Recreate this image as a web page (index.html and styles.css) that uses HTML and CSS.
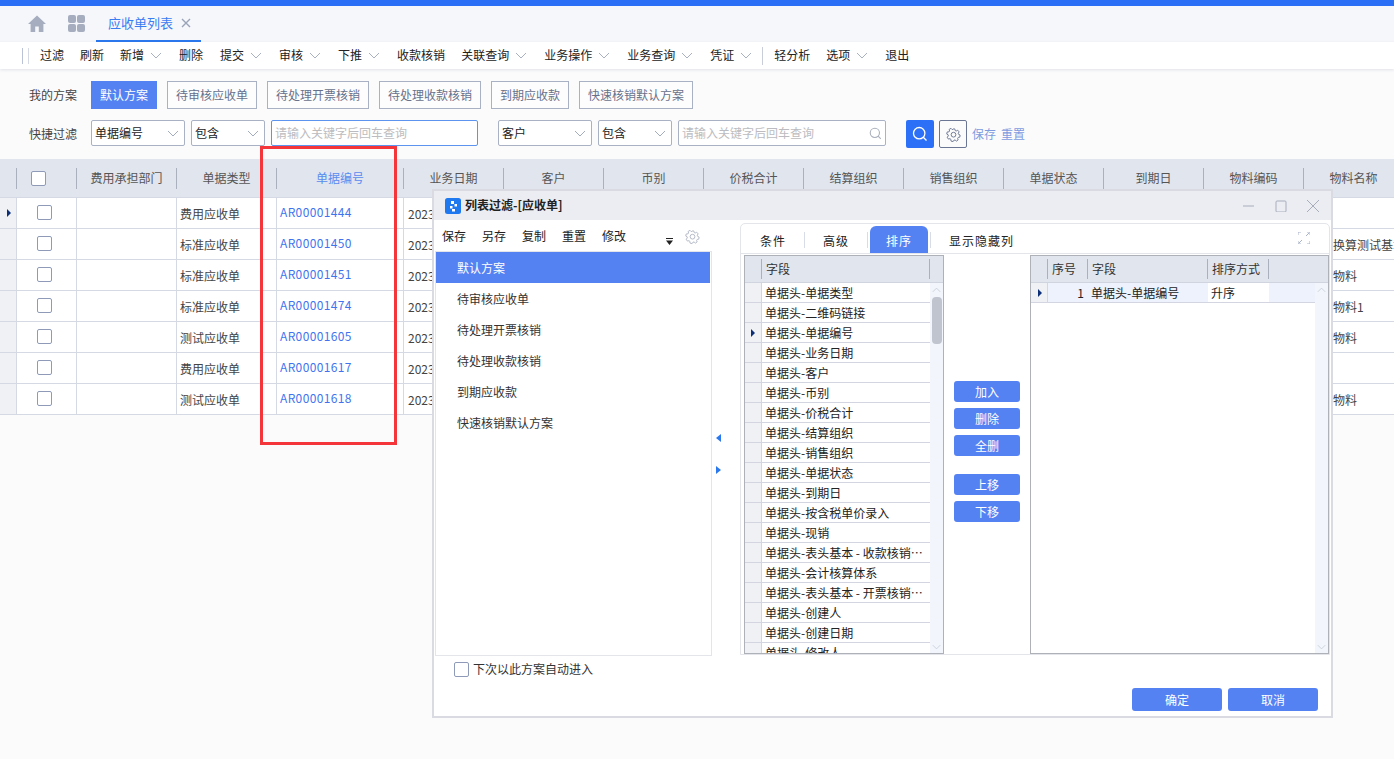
FILE: index.html
```html
<!DOCTYPE html>
<html lang="zh-CN">
<head>
<meta charset="utf-8">
<title>应收单列表</title>
<link rel="stylesheet" href="styles.css">
</head>
<body>
<svg class="defs" width="0" height="0" aria-hidden="true">
  <symbol id="chev" viewBox="0 0 12 7"><path d="M1 1l5 5 5-5" fill="none" stroke="currentColor" stroke-width="1"/></symbol>
  <symbol id="gear" viewBox="0 0 24 24"><path d="M12 2.5l2 .3.7 2.6 1.6.7 2.4-1.3 2.3 2.7-1.4 2.2.5 1.7 2.4 1.1-.4 3.4-2.6.5-.9 1.5.8 2.5-2.9 1.9-1.9-1.8-1.8.2-1.4 2.3-3.4-.8-.2-2.7-1.4-1.1-2.6.6L1.9 16l1.8-2-.2-1.8L1.2 11l.7-3.4 2.7-.1 1.1-1.4L5 3.6l3-1.8 1.8 2 1.7-.2z" fill="none" stroke="currentColor" stroke-width="1.6" stroke-linejoin="round" transform="translate(0 .3)"/><circle cx="12" cy="12.3" r="3.8" fill="none" stroke="currentColor" stroke-width="1.6"/></symbol>
  <symbol id="search" viewBox="0 0 16 16"><circle cx="7.2" cy="7.2" r="5.7" fill="none" stroke="currentColor" stroke-width="1.3"/><path d="M11.3 11.3l3.2 3.2" stroke="currentColor" stroke-width="1.3"/></symbol>
</svg>

<div class="topbar"></div>

<nav class="tabs">
  <svg class="ico-home" viewBox="0 0 18 17"><path d="M9 .5L0 9h2.6v8h4.6v-5.5h3.6V17h4.6V9H18z" fill="#a5adbf"/></svg>
  <span class="ico-apps"><i></i><i></i><i></i><i></i></span>
  <div class="tab">应收单列表
    <svg class="tab-x" viewBox="0 0 10 10"><path d="M1 1l8 8M9 1l-8 8" stroke="#9aa3b8" stroke-width="1.4"/></svg>
  </div>
</nav>

<div class="toolbar">
  <span class="tb-rule"></span><span class="tb-rule tb-rule-2"></span>
  <span class="tb">过滤</span>
  <span class="tb">刷新</span>
  <span class="tb">新增<svg class="tb-chev"><use href="#chev"/></svg></span>
  <span class="tb tb-wide">删除</span>
  <span class="tb">提交<svg class="tb-chev"><use href="#chev"/></svg></span>
  <span class="tb">审核<svg class="tb-chev"><use href="#chev"/></svg></span>
  <span class="tb">下推<svg class="tb-chev"><use href="#chev"/></svg></span>
  <span class="tb">收款核销</span>
  <span class="tb">关联查询<svg class="tb-chev"><use href="#chev"/></svg></span>
  <span class="tb">业务操作<svg class="tb-chev"><use href="#chev"/></svg></span>
  <span class="tb">业务查询<svg class="tb-chev"><use href="#chev"/></svg></span>
  <span class="tb">凭证<svg class="tb-chev"><use href="#chev"/></svg></span>
  <span class="tb-sep"></span>
  <span class="tb">轻分析</span>
  <span class="tb">选项<svg class="tb-chev"><use href="#chev"/></svg></span>
  <span class="tb">退出</span>
</div>

<section class="filters">
  <div class="scheme-row">
    <span class="f-label">我的方案</span>
    <div class="schemes">
      <span class="scheme scheme-on">默认方案</span>
      <span class="scheme">待审核应收单</span>
      <span class="scheme">待处理开票核销</span>
      <span class="scheme">待处理收款核销</span>
      <span class="scheme">到期应收款</span>
      <span class="scheme">快速核销默认方案</span>
    </div>
  </div>
  <div class="quick-row">
    <span class="f-label">快捷过滤</span>
    <span class="sel sel-a">单据编号<svg class="sel-chev"><use href="#chev"/></svg></span>
    <span class="sel sel-b">包含<svg class="sel-chev"><use href="#chev"/></svg></span>
    <span class="inp inp-on">请输入关键字后回车查询</span>
    <span class="sel sel-a sel-gap">客户<svg class="sel-chev"><use href="#chev"/></svg></span>
    <span class="sel sel-b">包含<svg class="sel-chev"><use href="#chev"/></svg></span>
    <span class="inp">请输入关键字后回车查询<svg class="inp-ico"><use href="#search"/></svg></span>
    <span class="btn-search"><svg class="btn-search-ico"><use href="#search"/></svg></span>
    <span class="btn-gear"><svg class="btn-gear-ico"><use href="#gear"/></svg></span>
    <span class="f-link f-link-a">保存</span>
    <span class="f-link">重置</span>
  </div>
</section>

<section class="grid">
  <div class="g-head">
    <span class="gh gh-mark"></span>
    <span class="gh gh-check"><span class="cb"></span></span>
    <span class="gh gh-w">费用承担部门</span>
    <span class="gh gh-w">单据类型</span>
    <span class="gh gh-no">单据编号</span>
    <span class="gh gh-w">业务日期</span>
    <span class="gh gh-w">客户</span>
    <span class="gh gh-w">币别</span>
    <span class="gh gh-w">价税合计</span>
    <span class="gh gh-w">结算组织</span>
    <span class="gh gh-w">销售组织</span>
    <span class="gh gh-w">单据状态</span>
    <span class="gh gh-w">到期日</span>
    <span class="gh gh-w">物料编码</span>
    <span class="gh gh-w">物料名称</span>
  </div>
  <div class="g-row">
    <span class="c c-mark"><i class="tri"></i></span><span class="c c-check"><span class="cb"></span></span><span class="c"></span>
    <span class="c c-type">费用应收单</span><span class="c c-no">AR00001444</span><span class="c c-date">2023-01-05</span><span class="c c-name"></span>
  </div>
  <div class="g-row">
    <span class="c c-mark"></span><span class="c c-check"><span class="cb"></span></span><span class="c"></span>
    <span class="c c-type">标准应收单</span><span class="c c-no">AR00001450</span><span class="c c-date">2023-01-05</span><span class="c c-name">单位换算测试基本</span>
  </div>
  <div class="g-row">
    <span class="c c-mark"></span><span class="c c-check"><span class="cb"></span></span><span class="c"></span>
    <span class="c c-type">标准应收单</span><span class="c c-no">AR00001451</span><span class="c c-date">2023-01-05</span><span class="c c-name">测试物料</span>
  </div>
  <div class="g-row">
    <span class="c c-mark"></span><span class="c c-check"><span class="cb"></span></span><span class="c"></span>
    <span class="c c-type">标准应收单</span><span class="c c-no">AR00001474</span><span class="c c-date">2023-01-05</span><span class="c c-name">测试物料1</span>
  </div>
  <div class="g-row">
    <span class="c c-mark"></span><span class="c c-check"><span class="cb"></span></span><span class="c"></span>
    <span class="c c-type">测试应收单</span><span class="c c-no">AR00001605</span><span class="c c-date">2023-01-05</span><span class="c c-name">测试物料</span>
  </div>
  <div class="g-row">
    <span class="c c-mark"></span><span class="c c-check"><span class="cb"></span></span><span class="c"></span>
    <span class="c c-type">费用应收单</span><span class="c c-no">AR00001617</span><span class="c c-date">2023-01-05</span><span class="c c-name"></span>
  </div>
  <div class="g-row">
    <span class="c c-mark"></span><span class="c c-check"><span class="cb"></span></span><span class="c"></span>
    <span class="c c-type">测试应收单</span><span class="c c-no">AR00001618</span><span class="c c-date">2023-01-05</span><span class="c c-name">测试物料</span>
  </div>
</section>

<div class="redbox"></div>

<div class="dialog">
  <header class="d-title">
    <svg class="d-logo" viewBox="0 0 16 16"><rect width="16" height="16" rx="2.5" fill="#1e78f0"/><rect x="6" y="3" width="3" height="3" fill="#fff"/><rect x="9.5" y="6" width="2.5" height="2.5" fill="#fff"/><rect x="5" y="8" width="2.5" height="2.5" fill="#fff"/><rect x="7" y="11" width="3" height="2.5" fill="#fff"/></svg>
    <span class="d-name">列表过滤-[应收单]</span>
    <span class="d-ctrls">
      <svg class="d-ctrl" viewBox="0 0 12 12"><path d="M0 6h11" stroke="#a7adbb"/></svg>
      <svg class="d-ctrl" viewBox="0 0 12 12"><rect x="1" y="1" width="10" height="11" rx="1" fill="none" stroke="#a7adbb"/></svg>
      <svg class="d-ctrl" viewBox="0 0 12 12"><path d="M0 0l12 12M12 0L0 12" stroke="#a7adbb"/></svg>
    </span>
  </header>

  <div class="d-body">
    <aside class="d-left">
      <div class="d-tools">
        <span class="d-tool">保存</span><span class="d-tool">另存</span><span class="d-tool">复制</span><span class="d-tool">重置</span><span class="d-tool">修改</span>
        <svg class="d-more" viewBox="0 0 7 7"><path d="M0 0h7v1H0zM0 2.5h7L3.5 7z" fill="#222"/></svg>
        <svg class="d-gear"><use href="#gear"/></svg>
      </div>
      <ul class="plans">
        <li class="plan plan-on">默认方案</li>
        <li class="plan">待审核应收单</li>
        <li class="plan">待处理开票核销</li>
        <li class="plan">待处理收款核销</li>
        <li class="plan">到期应收款</li>
        <li class="plan">快速核销默认方案</li>
      </ul>
    </aside>

    <div class="split"><i class="arrow arrow-l"></i><i class="arrow arrow-r"></i></div>

    <div class="d-right">
      <div class="d-tabs">
        <span class="dt">条件</span><span class="dt-sep"></span>
        <span class="dt">高级</span><span class="dt-sep dt-sep-near"></span>
        <span class="dt dt-on">排序</span><span class="dt-sep dt-sep-after"></span>
        <span class="dt">显示隐藏列</span>
        <svg class="d-expand" viewBox="0 0 12 12"><path d="M0 3V0h3M9 0h3v3M12 9v3H9M3 12H0V9M8 4l3-3M4 8l-3 3" fill="none" stroke="#a9b4ca"/></svg>
      </div>
      <div class="d-pane">
        <div class="lg">
          <div class="lg-head"><span class="lh-mark"></span><span class="lh-field">字段</span></div>
          <div class="lg-main">
            <div class="lg-rows">
              <div class="lr"><span class="lr-m"></span><span class="lr-t">单据头-单据类型</span></div>
              <div class="lr"><span class="lr-m"></span><span class="lr-t">单据头-二维码链接</span></div>
              <div class="lr"><span class="lr-m"><i class="tri"></i></span><span class="lr-t">单据头-单据编号</span></div>
              <div class="lr"><span class="lr-m"></span><span class="lr-t">单据头-业务日期</span></div>
              <div class="lr"><span class="lr-m"></span><span class="lr-t">单据头-客户</span></div>
              <div class="lr"><span class="lr-m"></span><span class="lr-t">单据头-币别</span></div>
              <div class="lr"><span class="lr-m"></span><span class="lr-t">单据头-价税合计</span></div>
              <div class="lr"><span class="lr-m"></span><span class="lr-t">单据头-结算组织</span></div>
              <div class="lr"><span class="lr-m"></span><span class="lr-t">单据头-销售组织</span></div>
              <div class="lr"><span class="lr-m"></span><span class="lr-t">单据头-单据状态</span></div>
              <div class="lr"><span class="lr-m"></span><span class="lr-t">单据头-到期日</span></div>
              <div class="lr"><span class="lr-m"></span><span class="lr-t">单据头-按含税单价录入</span></div>
              <div class="lr"><span class="lr-m"></span><span class="lr-t">单据头-现销</span></div>
              <div class="lr"><span class="lr-m"></span><span class="lr-t">单据头-表头基本 - 收款核销状态</span></div>
              <div class="lr"><span class="lr-m"></span><span class="lr-t">单据头-会计核算体系</span></div>
              <div class="lr"><span class="lr-m"></span><span class="lr-t">单据头-表头基本 - 开票核销状态</span></div>
              <div class="lr"><span class="lr-m"></span><span class="lr-t">单据头-创建人</span></div>
              <div class="lr"><span class="lr-m"></span><span class="lr-t">单据头-创建日期</span></div>
              <div class="lr"><span class="lr-m"></span><span class="lr-t">单据头-修改人</span></div>
            </div>
            <div class="sb">
              <svg class="sb-up"><use href="#chev"/></svg>
              <span class="sb-thumb"></span>
              <svg class="sb-down"><use href="#chev"/></svg>
            </div>
          </div>
        </div>

        <div class="moves">
          <span class="mv">加入</span>
          <span class="mv">删除</span>
          <span class="mv">全删</span>
          <span class="mv mv-gap">上移</span>
          <span class="mv">下移</span>
        </div>

        <div class="rg">
          <div class="rg-head">
            <span class="rh rh-mark"></span>
            <span class="rh rh-seq">序号</span>
            <span class="rh rh-field">字段</span>
            <span class="rh rh-order">排序方式</span>
            <span class="rh rh-end"></span>
          </div>
          <div class="rg-main">
            <div class="rg-rows">
              <div class="rr">
                <span class="rr-mark"><i class="tri"></i></span>
                <span class="rr-seq">1</span>
                <span class="rr-field">单据头-单据编号</span>
                <span class="rr-order">升序</span>
                <span class="rr-end"></span>
              </div>
            </div>
            <div class="sb sb-r">
              <svg class="sb-up"><use href="#chev"/></svg>
              <svg class="sb-down"><use href="#chev"/></svg>
            </div>
          </div>
        </div>
      </div>
    </div>
  </div>

  <footer class="d-foot">
    <label class="auto"><span class="cb"></span>下次以此方案自动进入</label>
    <div class="d-btns"><span class="d-btn">确定</span><span class="d-btn">取消</span></div>
  </footer>
</div>
</body>
</html>
```

FILE: styles.css
```css
* { box-sizing: border-box; }
html, body { margin: 0; height: 100%; }
body {
  width: 1394px; height: 759px; overflow: hidden; position: relative;
  background: #fbfbfc; color: #333;
  font: 12px/1.2 "Noto Sans CJK SC", "Noto Sans", sans-serif;
}
ul { list-style: none; margin: 0; padding: 0; }
i { display: block; }
.defs { position: absolute; }

.topbar { height: 6px; background: #2b6ff6; }

.tabs { height: 36px; background: #f6f7fb; display: flex; align-items: center; padding-left: 28px; }
.ico-home { width: 18px; height: 17px; margin-top: -2px; }
.ico-apps { width: 17px; height: 17px; margin-left: 22px; margin-top: -2px; display: grid; grid-template-columns: 8px 8px; gap: 1px; }
.ico-apps i { background: #a5adbf; border-radius: 2px; }
.tab {
  margin-left: 11px; width: 105px; height: 36px; display: flex; align-items: center; padding: 0 0 0 12px;
  color: #3a7df2; font-size: 13px; border-bottom: 2px solid #2b78ee; white-space: nowrap; flex: none;
}
.tab-x { width: 10px; height: 10px; margin-left: 8px; flex: none; }

.toolbar {
  height: 27px; background: #fff; display: flex; align-items: center; padding-left: 22px; color: #222;
  box-shadow: 0 1px 3px rgba(40,50,80,.12); position: relative;
}
.tb-rule { width: 1px; height: 16px; background: #b9c2d6; margin-right: 5px; }
.tb-rule-2 { margin-right: 11px; background: #d4d9e4; }
.tb { display: flex; align-items: center; margin-right: 16px; white-space: nowrap; }
.tb-wide { margin-right: 17px; }
.tb-chev { width: 12px; height: 7px; margin: 1px 1px 0 6px; color: #a9b0c2; }
.tb-sep { width: 1px; height: 18px; background: #c8cdd9; margin: 0 11px 0 -7px; }

.filters { height: 90px; padding: 12px 0 0 29px; }
.scheme-row { display: flex; align-items: center; height: 28px; }
.f-label { width: 62px; color: #444; flex: none; }
.schemes { display: flex; gap: 10px; }
.scheme {
  height: 28px; padding: 0 8px; border: 1px solid #a9b1c4; display: flex; align-items: center;
  color: #68718a; white-space: nowrap; background: #fdfdfe;
}
.scheme-on { background: #5582f3; border-color: #5582f3; color: #fff; }

.quick-row { display: flex; align-items: flex-start; margin-top: 11px; height: 28px; }
.quick-row .f-label { line-height: 28px; }
.sel {
  height: 26px; border: 1px solid #a9b1c4; border-radius: 2px; background: #fff; color: #222;
  display: flex; align-items: center; justify-content: space-between; padding: 0 5px 0 3px; margin-right: 6px; flex: none;
}
.sel-a { width: 94px; }
.sel-b { width: 74px; }
.sel-gap { margin-left: 14px; }
.sel-chev { width: 12px; height: 7px; color: #a3abbe; }
.inp {
  height: 26px; width: 208px; border: 1px solid #a9b1c4; border-radius: 2px; background: #fff; color: #bcbcc0;
  display: flex; align-items: center; justify-content: space-between; padding: 0 3px; flex: none;
}
.inp-on { width: 207px; border-color: #5d94f0; margin-right: 6px; }
.inp-ico { width: 13px; height: 13px; color: #a9aebb; }
.btn-search {
  width: 28px; height: 28px; margin-left: 20px; background: #2b70f6; border-radius: 2px;
  display: flex; align-items: center; justify-content: center;
}
.btn-search-ico { width: 16px; height: 16px; color: #fff; }
.btn-gear {
  width: 28px; height: 28px; margin-left: 5px; border: 1px solid #6b7694; border-radius: 2px;
  display: flex; align-items: center; justify-content: center;
}
.btn-gear-ico { width: 15px; height: 15px; color: #737d98; }
.f-link { line-height: 28px; color: #7f9bdf; margin-left: 5px; }
.f-link-a { margin-right: 0; }

.grid { width: 1394px; overflow: hidden; }
.g-head { height: 39px; background: #e1e5ee; display: flex; align-items: center; border-bottom: 1px solid #d5d9e4; }
.gh { height: 21px; flex: none; border-left: 1px solid #aab0be; display: flex; align-items: center; justify-content: center; color: #555; width: 100px; white-space: nowrap; }
.gh-mark { width: 16px; border-left: 0; }
.gh-check { width: 60px; justify-content: flex-start; padding-left: 14px; }
.gh-no { width: 127px; color: #5a8cf0; }
.g-row { height: 31px; display: grid; grid-template-columns: 16px 60px 100px 100px 127px 900px 91px; border-bottom: 1px solid #d5d9e3; background: #fff; }
.c { border-left: 1px solid #d5d9e3; display: flex; align-items: center; white-space: nowrap; overflow: hidden; }
.c-mark { background: #eff1f5; border-left: 0; padding-left: 7px; }
.c-check { justify-content: center; padding: 0 5px 1px 0; }
.c-type { padding: 2px 0 0 3px; color: #444; }
.c-no { padding: 0 0 2px 3px; color: #3f74ee; letter-spacing: .35px; }
.c-date { padding: 2px 0 0 4px; color: #444; }
.c-name { padding: 2px 0 0 5px; color: #444; }
.cb { width: 15px; height: 15px; border: 1px solid #8e9ab8; border-radius: 2px; background: #fff; display: block; flex: none; }
.tri { width: 0; height: 0; border-left: 4px solid #0c2f78; border-top: 4px solid transparent; border-bottom: 4px solid transparent; }

.redbox { position: absolute; left: 260px; top: 146px; width: 137px; height: 299px; border: 3px solid #f4363a; }

.dialog {
  position: absolute; left: 432px; top: 189px; width: 901px; height: 529px;
  border: 2px solid #d9dae2; background: #fff; display: flex; flex-direction: column;
}
.d-title { height: 29px; flex: none; background: #ecedf2; display: flex; align-items: center; padding-left: 11px; }
.d-logo { width: 16px; height: 16px; }
.d-name { margin-left: 4px; font-weight: 700; color: #222; }
.d-ctrls { margin-left: auto; display: flex; gap: 20px; padding-right: 12px; }
.d-ctrl { width: 12px; height: 12px; }

.d-body { height: 436px; flex: none; display: flex; }
.d-left { width: 278px; padding-left: 1px; flex: none; }
.d-tools { height: 31px; display: flex; align-items: center; padding: 1px 0 0 7px; gap: 16px; color: #222; }
.d-tool { white-space: nowrap; flex: none; }
.d-more { width: 7px; height: 7px; margin: 11px 0 0 24px; flex: none; }
.d-gear { width: 15px; height: 15px; color: #b6bbc8; margin-left: -4px; flex: none; }
.plans { height: 405px; width: 277px; border: 1px solid #e3e5ea; }
.plan { height: 31px; line-height: 31px; padding-left: 21px; color: #333; width: 274px; }
.plan-on { background: #5582f3; color: #fff; }

.split { width: 28px; flex: none; padding: 214px 0 0 4px; display: flex; flex-direction: column; gap: 24px; }
.arrow { width: 0; height: 0; border-top: 4px solid transparent; border-bottom: 4px solid transparent; }
.arrow-l { border-right: 5px solid #2b78ee; }
.arrow-r { border-left: 5px solid #2b78ee; }

.d-right { width: 590px; flex: none; margin-top: 3px; height: 432px; border: 1px solid #e3e5ea; border-radius: 5px 5px 0 0; display: flex; flex-direction: column; }
.d-tabs { height: 30px; flex: none; display: flex; align-items: flex-end; padding-left: 19px; border-bottom: 1px solid #e3e5ea; }
.dt { letter-spacing: 1px; height: 27px; line-height: 29px; color: #222; white-space: nowrap; flex: none; }
.dt-on { background: #5582f3; color: #fff; width: 58px; text-align: center; border-radius: 6px 6px 0 0; }
.dt-sep { width: 1px; height: 16px; background: #d7dce6; margin: 0 18px 5px 18px; flex: none; }
.dt-sep-near { margin-right: 2px; }
.dt-sep-after { margin: 0 18px 5px 2px; }
.d-expand { width: 12px; height: 12px; margin: 0 19px 9px auto; }

.d-pane { flex: 1; display: flex; padding: 1px 0 0 3px; min-height: 0; }
.lg { width: 200px; height: 399px; border: 1px solid #aeb1b8; flex: none; display: flex; flex-direction: column; overflow: hidden; }
.lg-head { height: 27px; flex: none; background: #e1e5ee; display: flex; align-items: center; border-bottom: 1px solid #d0d4df; }
.lh-mark { width: 16px; height: 20px; }
.lh-field { width: 169px; height: 20px; border: 1px solid #aab0be; border-width: 0 1px; padding-left: 4px; line-height: 20px; color: #333; }
.lg-main { flex: 1; display: flex; min-height: 0; }
.lg-rows { width: 185px; flex: none; overflow: hidden; }
.lr { height: 20px; display: flex; border-bottom: 1px solid #d3d6e0; }
.lr-m { width: 17px; flex: none; background: #eff1f5; border-right: 1px solid #d3d6e0; display: flex; align-items: center; padding-left: 6px; }
.lr-t { flex: 1; padding: 1px 0 0 3px; color: #222; line-height: 18px; white-space: nowrap; overflow: hidden; text-overflow: ellipsis; min-width: 0; }
.sb { flex: 1; background: #f2f5fb; display: flex; flex-direction: column; align-items: center; padding: 4px 0 3px; }
.sb-up { width: 9px; height: 6px; color: #c3c8d3; transform: rotate(180deg); flex: none; }
.sb-down { width: 9px; height: 6px; color: #c3c8d3; margin-top: auto; flex: none; }
.sb-thumb { width: 10px; height: 47px; margin-top: 4px; border-radius: 4px; background: #bfc4cf; }

.moves { width: 86px; flex: none; padding: 126px 0 0 10px; display: flex; flex-direction: column; gap: 6px; }
.mv { width: 66px; height: 21px; line-height: 21px; background: #5582f3; color: #fff; text-align: center; border-radius: 3px; }
.mv-gap { margin-top: 12px; }

.rg { width: 299px; height: 399px; border: 1px solid #aeb1b8; flex: none; display: flex; flex-direction: column; overflow: hidden; }
.rg-head { height: 27px; flex: none; background: #e1e5ee; display: flex; align-items: center; border-bottom: 1px solid #d0d4df; }
.rh { height: 20px; line-height: 20px; padding-left: 4px; border-left: 1px solid #aab0be; flex: none; color: #333; }
.rh-mark { width: 16px; border-left: 0; }
.rh-seq { width: 40px; }
.rh-field { width: 120px; }
.rh-order { width: 61px; }
.rh-end { width: 1px; padding: 0; }
.rg-main { flex: 1; display: flex; min-height: 0; }
.rg-rows { width: 284px; flex: none; }
.rr { height: 20px; display: flex; border-bottom: 1px solid #d3d6e0; line-height: 20px; color: #222; }
.rr-mark { width: 17px; background: #eff1f5; display: flex; align-items: center; padding-left: 7px; border-right: 1px solid #d3d6e0; flex: none; }
.rr-seq { width: 40px; flex: none; text-align: right; padding-right: 4px; background: #edf2fd; }
.rr-field { width: 120px; flex: none; padding-left: 3px; background: #edf2fd; }
.rr-order { width: 61px; flex: none; padding-left: 3px; background: #fff; }
.rr-end { flex: 1; background: #edf2fd; }

.d-foot { flex: 1; display: flex; flex-direction: column; padding: 6px 13px 0 20px; }
.auto { display: flex; align-items: center; gap: 4px; height: 15px; color: #333; }
.d-btns { display: flex; justify-content: flex-end; gap: 6px; margin-top: 11px; }
.d-btn { width: 90px; height: 23px; line-height: 24px; background: #5582f3; color: #fff; text-align: center; border-radius: 3px; }
```
